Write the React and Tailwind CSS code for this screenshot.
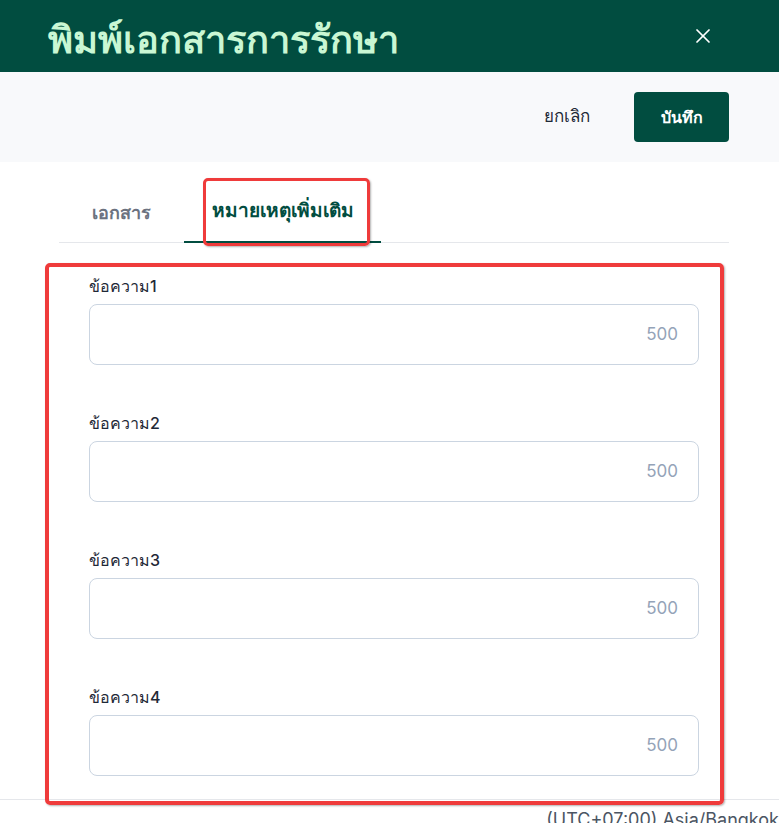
import { X } from 'lucide-react';

const fields = ['ข้อความ1', 'ข้อความ2', 'ข้อความ3', 'ข้อความ4'];

const App = () => {
  return (
    <div className="relative w-full h-[823px] overflow-hidden bg-white font-['Inter','Noto_Sans',sans-serif] text-[#1f2937]">
      {/* Header */}
      <div className="h-[72px] bg-[#014d40] flex items-center justify-between pl-[48px] pr-[64px]">
        <h1 className="text-[38px] font-bold text-[#c9f7d4] leading-none pt-[6px]">พิมพ์เอกสารการรักษา</h1>
        <X className="h-[24px] w-[24px] text-white" strokeWidth={1.75} />
      </div>

      {/* Action bar */}
      <div className="h-[90px] bg-[#f8f9fb] flex items-center justify-end pr-[50px] gap-[44px]">
        <button className="text-[17px] font-medium text-[#1f2937]">ยกเลิก</button>
        <button className="h-[50px] w-[95px] rounded-[4px] bg-[#014d40] text-white text-[16px] font-semibold">บันทึก</button>
      </div>

      {/* Tabs */}
      <div className="mx-[59px] mt-[8px] mr-[50px] flex h-[73px] border-b border-[#e5e7eb]">
        <div className="w-[125px] flex items-center justify-center text-[18px] font-semibold text-[#6b7280] pt-[12px]">เอกสาร</div>
        <div className="w-[197px] flex items-center justify-center text-[19px] font-bold text-[#014d40] border-b-2 border-[#014d40] -mb-px pt-[12px]">หมายเหตุเพิ่มเติม</div>
      </div>

      {/* Fields */}
      <div className="mx-[89px] mr-[80px] mt-[33px] flex flex-col gap-[48px]">
        {fields.map((f) => (
          <div key={f} className="flex flex-col">
            <label className="text-[16px] font-medium text-[#1f2937] leading-[20px] mb-[8px]">{f}</label>
            <div className="h-[61px] rounded-[8px] border border-[#cbd5e1] flex items-center justify-end pr-[20px]">
              <span className="text-[17px] text-[#94a3b8]">500</span>
            </div>
          </div>
        ))}
      </div>

      {/* Footer */}
      <div className="absolute left-0 right-0 top-[799px] border-t border-[#e5e7eb] flex justify-end">
        <span className="text-[18px] text-[#4b5563] whitespace-nowrap mt-[6px] mr-[0px]">(UTC+07:00) Asia/Bangkok</span>
      </div>

      {/* Annotation overlays */}
      <div className="absolute left-[203px] top-[178px] w-[167px] h-[68px] border-[3px] border-[#ef3b3b] rounded-[5px] shadow-[1px_1px_2px_rgba(0,0,0,0.3)]" />
      <div className="absolute left-[45px] top-[263px] w-[679px] h-[542px] border-[4px] border-[#ef3b3b] rounded-[5px] shadow-[1px_1px_2px_rgba(0,0,0,0.3)]" />
    </div>
  );
};

export default App;
